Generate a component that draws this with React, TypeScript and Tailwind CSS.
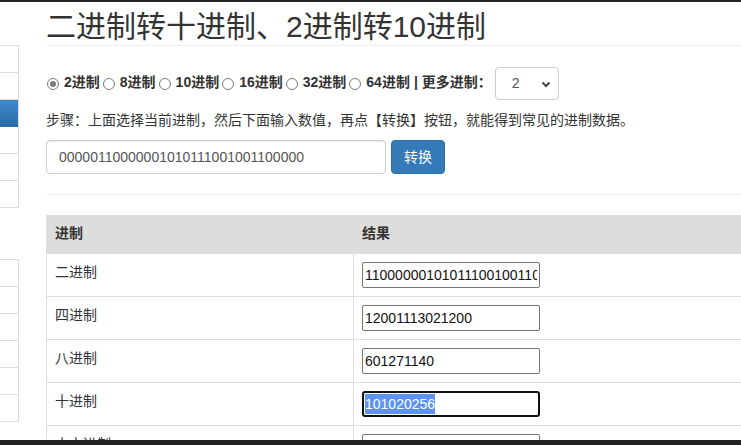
import React from "react";

const bases = ["2进制", "8进制", "10进制", "16进制", "32进制", "64进制"];

const rows = [
  { label: "二进制", value: "110000001010111001001100000" },
  { label: "四进制", value: "12001113021200" },
  { label: "八进制", value: "601271140" },
  { label: "十进制", value: "101020256", selected: true },
  { label: "十六进制", value: "6057260" },
];

function Radio({ checked }: { checked?: boolean }) {
  return (
    <span className="w-[12px] h-[12px] rounded-full border border-[#7a7a7a] bg-white flex items-center justify-center shrink-0">
      {checked && <span className="w-[6px] h-[6px] rounded-full bg-[#7a7a7a]" />}
    </span>
  );
}

function SideGroup({ active, className }: { active?: number; className?: string }) {
  return (
    <ul className={"border-t border-r border-[#ddd] " + (className ?? "")}>
      {[0, 1, 2, 3, 4, 5].map((i) => (
        <li
          key={i}
          className={
            i === active
              ? "h-[27px] bg-gradient-to-b from-[#3d89ca] to-[#2c6ca7] border-b border-[#2c6ca7]"
              : "h-[27px] bg-white border-b border-[#ddd]"
          }
        />
      ))}
    </ul>
  );
}

export default function App() {
  return (
    <div className="w-[741px] h-[445px] overflow-hidden flex flex-col bg-white text-[14px] text-[#333] font-['Liberation_Sans','Noto_Sans_CJK_SC',sans-serif]">
      <div className="h-[2px] shrink-0 bg-[#222]" />

      <div className="flex flex-1 min-h-0">
        <aside className="w-[19px] shrink-0 pt-[43px]">
          <SideGroup active={2} />
          <SideGroup className="mt-[51px]" />
        </aside>

        <main className="ml-[27px] flex-1 min-w-0 overflow-hidden">
          <div className="w-[760px]">
            <h1 className="pt-[8px] pb-[1px] text-[30px] leading-[34px] font-normal text-[#333] border-b border-[#eee]">
              二进制转十进制、2进制转10进制
            </h1>

            <div className="mt-[21px] h-[33px] flex items-center font-bold">
              {bases.map((b, i) => (
                <label key={b} className="flex items-center mr-[2px]">
                  <span className="ml-[1px] mr-[5px]">
                    <Radio checked={i === 0} />
                  </span>
                  <span className="leading-[20px] -mt-[3px]">{b}</span>
                </label>
              ))}
              <span className="leading-[20px] -mt-[3px] ml-[2px]">| 更多进制：</span>
              <div className="ml-[3px] w-[64px] h-[33px] border border-[#ccc] rounded-[4px] flex items-center justify-between pl-[16px] pr-[7px] font-normal text-[#555]">
                <span>2</span>
                <svg width="10" height="10" viewBox="0 0 10 10" className="text-[#444]">
                  <path d="M1.5 3.5 L5 7 L8.5 3.5" fill="none" stroke="currentColor" strokeWidth="2" />
                </svg>
              </div>
            </div>

            <p className="mt-[10px] leading-[20px]">
              步骤：上面选择当前进制，然后下面输入数值，再点【转换】按钮，就能得到常见的进制数据。
            </p>

            <div className="mt-[10px] flex gap-[5px]">
              <div className="w-[340px] h-[34px] border border-[#ccc] rounded-[4px] px-[12px] flex items-center text-[#555] shadow-[inset_0_1px_1px_rgba(0,0,0,0.075)]">
                00000110000001010111001001100000
              </div>
              <button className="w-[54px] h-[34px] rounded-[4px] bg-[#337ab7] border border-[#2e6da4] text-white">
                转换
              </button>
            </div>

            <div className="mt-[20px] border-t border-[#eee]" />

            <div className="mt-[20px]">
              <div className="h-[39px] bg-[#ddd] flex font-bold leading-[20px] pt-[8px]">
                <div className="w-[307px] pl-[9px]">进制</div>
                <div className="pl-[9px]">结果</div>
              </div>
              {rows.map((r) => (
                <div key={r.label} className="h-[43px] flex border-l border-b border-[#ddd]">
                  <div className="w-[306px] pl-[8px] pt-[8px] leading-[20px]">{r.label}</div>
                  <div className="border-l border-[#ddd] pl-[8px] pt-[8px]">
                    {r.selected ? (
                      <div className="w-[178px] h-[26px] border-2 border-[#101010] rounded-[3px] flex items-center pl-[1px] text-[14px]">
                        <span className="bg-[#5e93f6] text-white leading-[20px]">{r.value}</span>
                      </div>
                    ) : (
                      <input
                        readOnly
                        value={r.value}
                        className="w-[178px] h-[26px] border border-[#767676] rounded-[2px] px-[2px] text-[14px] text-[#111] bg-white outline-none"
                      />
                    )}
                  </div>
                </div>
              ))}
            </div>
          </div>
        </main>
      </div>

      <div className="h-[5px] shrink-0 bg-[#222]" />
    </div>
  );
}
